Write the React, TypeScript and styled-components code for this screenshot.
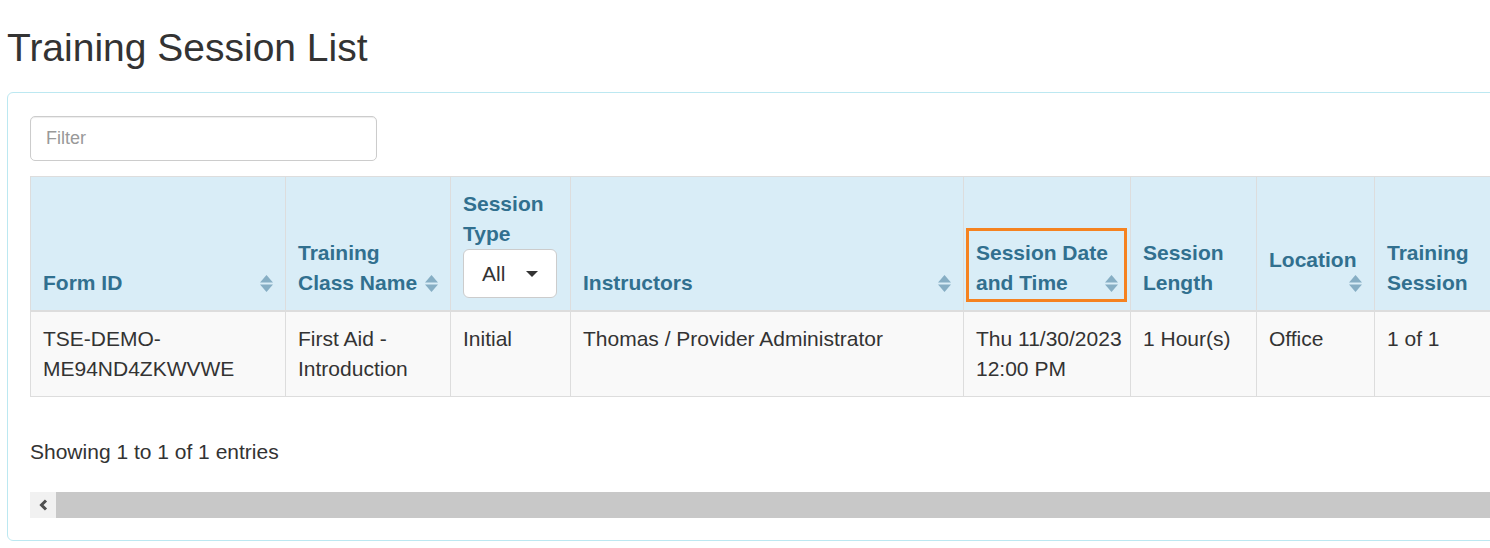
import React from "react";
import styled, { createGlobalStyle } from "styled-components";

const GlobalStyle = createGlobalStyle`
  html, body {
    margin: 0;
    padding: 0;
    background: #fff;
    overflow: hidden;
  }
  body {
    font-family: "Liberation Sans", Arial, sans-serif;
    font-size: 21px;
    line-height: 30px;
    color: #333;
  }
  * {
    box-sizing: border-box;
  }
`;

const Page = styled.div`
  padding: 0 7px;
`;

const Title = styled.h1`
  margin: 26px 0 23px;
  font-size: 39px;
  line-height: 43px;
  font-weight: 500;
  color: #333;
`;

const Panel = styled.div`
  width: 1800px;
  border: 1px solid #bce8f1;
  border-radius: 6px;
  padding: 23px 22px 22px;
`;

const FilterInput = styled.input`
  display: block;
  width: 347px;
  height: 45px;
  padding: 0 15px;
  margin: 0 0 15px;
  font: 18px "Liberation Sans", Arial, sans-serif;
  color: #555;
  border: 1px solid #ccc;
  border-radius: 5px;
  box-shadow: inset 0 1px 1px rgba(0, 0, 0, 0.075);
  outline: none;
  &::placeholder {
    color: #999;
  }
`;

const Table = styled.table`
  table-layout: fixed;
  border-collapse: collapse;
  border: 1px solid #ddd;
`;

const Th = styled.th`
  position: relative;
  padding: 12px;
  vertical-align: bottom;
  text-align: left;
  background: #d9edf7;
  color: #31708f;
  font-weight: 700;
  border: 1px solid #ddd;
  border-bottom-width: 2px;
`;

const Td = styled.td`
  padding: 12px;
  vertical-align: top;
  background: #f9f9f9;
  border: 1px solid #ddd;
  white-space: nowrap;
`;

const Line = styled.div`
  white-space: nowrap;
`;

const LastRow = styled.div`
  display: flex;
  flex-wrap: wrap;
  align-items: flex-end;
  justify-content: space-between;
  column-gap: 4px;
`;

const SortSvg = styled.svg`
  display: block;
  flex: none;
  margin-left: auto;
  margin-bottom: 6px;
`;

const FakeSelect = styled.div`
  display: flex;
  align-items: center;
  justify-content: space-between;
  width: 94px;
  height: 49px;
  padding: 0 18px;
  background: #fff;
  border: 1px solid #ccc;
  border-radius: 6px;
  color: #333;
  font-weight: 400;
`;

const Highlight = styled.div`
  position: absolute;
  left: 2px;
  right: 3px;
  top: 51px;
  bottom: 8px;
  border: 3px solid #f58220;
  pointer-events: none;
`;

const Info = styled.div`
  margin-top: 40px;
`;

const ScrollTrack = styled.div`
  display: flex;
  height: 26px;
  margin-top: 25px;
  background: #c8c8c8;
`;

const ScrollButton = styled.div`
  width: 26px;
  display: flex;
  align-items: center;
  justify-content: center;
  background: #f1f1f1;
`;

function SortIcon() {
  return (
    <SortSvg width="13" height="17" viewBox="0 0 13 17">
      <polygon points="6.5,0 13,7.5 0,7.5" fill="#86aec4" />
      <polygon points="0,9.5 13,9.5 6.5,17" fill="#86aec4" />
    </SortSvg>
  );
}

interface HeadProps {
  lines: string[];
  sortable?: boolean;
  highlight?: boolean;
  children?: React.ReactNode;
}

function Head({ lines, sortable, highlight, children }: HeadProps) {
  const first = lines.slice(0, -1);
  const last = lines[lines.length - 1];
  return (
    <Th>
      {highlight && <Highlight />}
      {first.map((l) => (
        <Line key={l}>{l}</Line>
      ))}
      <LastRow>
        <Line>{last}</Line>
        {sortable && <SortIcon />}
      </LastRow>
      {children}
    </Th>
  );
}

const widths = [255, 165, 120, 393, 167, 126, 118, 220];

function App() {
  const total = widths.reduce((a, b) => a + b, 0);
  return (
    <Page>
      <GlobalStyle />
      <Title>Training Session List</Title>
      <Panel>
        <FilterInput placeholder="Filter" />
        <Table style={{ width: total }}>
          <colgroup>
            {widths.map((w, i) => (
              <col key={i} style={{ width: w }} />
            ))}
          </colgroup>
          <thead>
            <tr>
              <Head lines={["Form ID"]} sortable />
              <Head lines={["Training", "Class Name"]} sortable />
              <Head lines={["Session", "Type"]}>
                <FakeSelect>
                  <span>All</span>
                  <svg width="12" height="6" viewBox="0 0 12 6">
                    <polygon points="0,0 12,0 6,6" fill="#333" />
                  </svg>
                </FakeSelect>
              </Head>
              <Head lines={["Instructors"]} sortable />
              <Head lines={["Session Date", "and Time"]} sortable highlight />
              <Head lines={["Session", "Length"]} />
              <Head lines={["Location"]} sortable />
              <Head lines={["Training", "Session"]} />
            </tr>
          </thead>
          <tbody>
            <tr>
              <Td>
                TSE-DEMO-
                <br />
                ME94ND4ZKWVWE
              </Td>
              <Td>
                First Aid -
                <br />
                Introduction
              </Td>
              <Td>Initial</Td>
              <Td>Thomas / Provider Administrator</Td>
              <Td>
                Thu 11/30/2023
                <br />
                12:00 PM
              </Td>
              <Td>1 Hour(s)</Td>
              <Td>Office</Td>
              <Td>1 of 1</Td>
            </tr>
          </tbody>
        </Table>
        <Info>Showing 1 to 1 of 1 entries</Info>
        <ScrollTrack>
          <ScrollButton>
            <svg width="9" height="12" viewBox="0 0 9 12">
              <polyline
                points="7,1.5 2.5,6 7,10.5"
                fill="none"
                stroke="#505050"
                strokeWidth="3"
              />
            </svg>
          </ScrollButton>
        </ScrollTrack>
      </Panel>
    </Page>
  );
}

export default App;
